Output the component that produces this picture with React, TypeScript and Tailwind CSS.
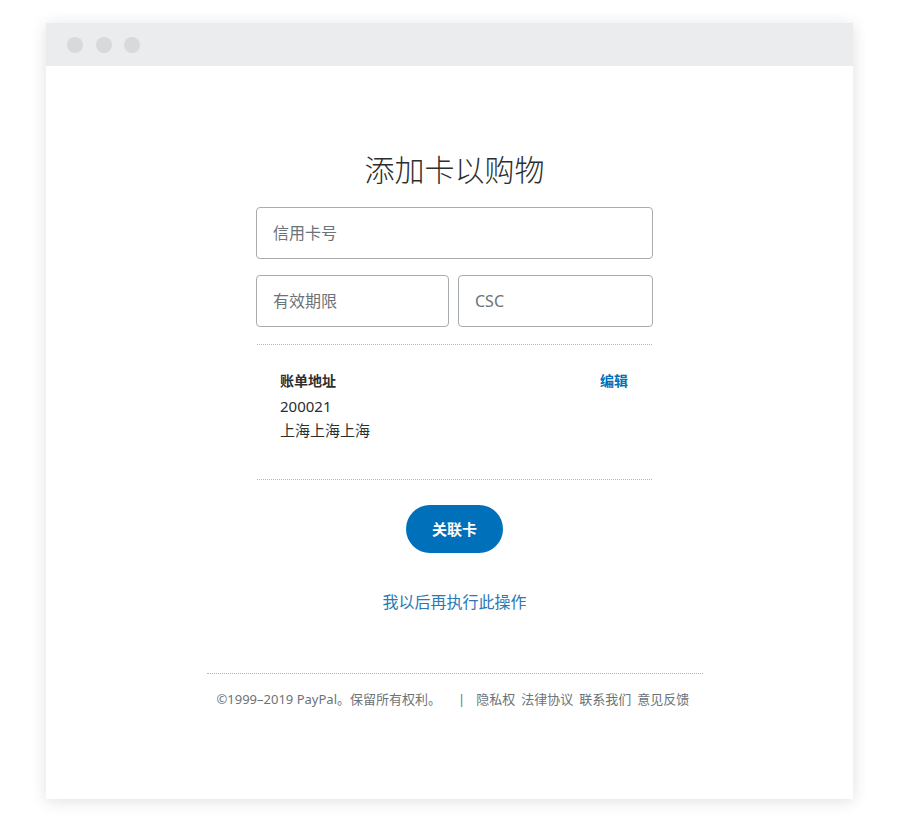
import React from "react";

const font = { fontFamily: '"Noto Sans", "Noto Sans CJK SC", sans-serif' };

export default function App() {
  return (
    <div className="w-[900px] h-[828px] bg-white pt-[23px] pl-[46px]" style={font}>
      <div className="w-[807px] h-[776px] bg-white shadow-[0_2px_14px_rgba(60,60,90,0.16)] flex flex-col">
        <div className="h-[43px] bg-[#ebeced] flex items-center gap-[12.5px] pl-[21px] shrink-0">
          <span className="w-[16px] h-[16px] rounded-full bg-[#d8d9da]" />
          <span className="w-[16px] h-[16px] rounded-full bg-[#d8d9da]" />
          <span className="w-[16px] h-[16px] rounded-full bg-[#d8d9da]" />
        </div>
        <div className="flex-1 pl-[10px] flex flex-col items-center">
          <div className="w-[397px] flex flex-col pt-[86px]">
            <h1 className="text-[30px] leading-[36px] font-light text-[#2c2e2f] text-center">添加卡以购物</h1>
            <div className="mt-[19px] h-[52px] border border-[#a9acae] rounded-[4px] flex items-center pl-[16px] text-[16px] text-[#6c7378]">
              信用卡号
            </div>
            <div className="mt-[16px] flex gap-[9px]">
              <div className="w-[193px] h-[52px] border border-[#a9acae] rounded-[4px] flex items-center pl-[16px] text-[16px] text-[#6c7378]">
                有效期限
              </div>
              <div className="flex-1 h-[52px] border border-[#a9acae] rounded-[4px] flex items-center pl-[16px] text-[16px] text-[#6c7378]">
                CSC
              </div>
            </div>
            <div className="mt-[17px] mx-[1px] border-t border-dotted border-[#b5b8ba]" />
            <div className="pt-[26px] pb-[37px] pl-[24px] pr-[25px]">
              <div className="flex justify-between items-center">
                <span className="text-[14px] leading-[20px] font-bold text-[#2c2e2f]">账单地址</span>
                <span className="text-[14px] leading-[20px] font-bold text-[#0070ba]">编辑</span>
              </div>
              <div className="mt-[3px] text-[15px] leading-[24px] text-[#2c2e2f]">200021</div>
              <div className="text-[15px] leading-[24px] text-[#2c2e2f]">上海上海上海</div>
            </div>
            <div className="mx-[1px] border-t border-dotted border-[#b5b8ba]" />
            <div className="mt-[25px] flex justify-center">
              <button className="w-[97px] h-[48px] rounded-full bg-[#0070ba] text-white text-[15px] font-bold">
                关联卡
              </button>
            </div>
            <div className="mt-[37px] text-center text-[16px] leading-[24px] text-[#2a78b6]">我以后再执行此操作</div>
          </div>
          <div className="w-[496px] mt-[59px] border-t border-dotted border-[#b5b8ba]" />
          <div className="w-[496px] pt-[16px] flex items-center text-[13px] leading-[18px] text-[#6c7378] pl-[10px]">
            <span>©1999–2019 PayPal。保留所有权利。</span>
            <span className="ml-[17px] mr-[11px] text-[#6c7378]">|</span>
            <span>隐私权</span>
            <span className="ml-[6px]">法律协议</span>
            <span className="ml-[6px]">联系我们</span>
            <span className="ml-[6px]">意见反馈</span>
          </div>
        </div>
      </div>
    </div>
  );
}
